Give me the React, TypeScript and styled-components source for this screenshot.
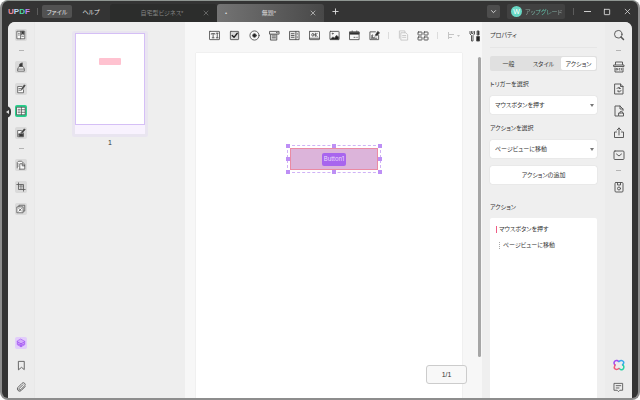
import React from "react";
import styled, { createGlobalStyle, css } from "styled-components";

const GlobalStyle = createGlobalStyle`
  *, *::before, *::after { box-sizing: border-box; }
  html, body, #root { height: 100%; }
  body {
    margin: 0;
    background: #fff;
    color: #333;
    font: 6px/10px "Liberation Sans", "Noto Sans CJK JP", sans-serif;
    font-feature-settings: "palt";
    overflow: hidden;
  }
  button, select { font: inherit; font-feature-settings: inherit; color: inherit; border: 0; padding: 0; margin: 0; background: none; }
  svg { display: block; flex: none; }
`;

/* ---------- window frame ---------- */

const Window = styled.div`
  height: 100vh;
  display: flex;
  flex-direction: column;
  padding: 0 6px;
  background: #343434;
  border: 2px solid #8d8d8d;
  border-top: 1px solid #8f9692;
  border-radius: 8px;
  overflow: hidden;
`;

const TitleBar = styled.header`
  flex: none;
  height: 21px;
  display: flex;
  align-items: center;
  color: #e4e4e4;
`;

const Logo = styled.div`
  width: 29px;
  font: bold 8px/10px "Liberation Sans", sans-serif;
  display: flex;
`;

const Glyph = styled.span<{ $color: string }>`
  color: ${(p) => p.$color};
`;

const BarRule = styled.span<{ $dark?: boolean }>`
  flex: none;
  width: 1px;
  height: 7px;
  background: ${(p) => (p.$dark ? "#5c5c5c" : "#dcdcdc")};
`;

const MenuButton = styled.button<{ $active?: boolean }>`
  height: 13px;
  width: 30px;
  margin-left: 4px;
  border-radius: 2px;
  white-space: nowrap;
  background: ${(p) => (p.$active ? "#525252" : "transparent")};
`;

const Tabs = styled.div`
  align-self: flex-end;
  display: flex;
  margin-left: 4px;
`;

const DocTab = styled.div<{ $active?: boolean }>`
  width: 107px;
  height: 18px;
  display: flex;
  align-items: center;
  padding: 0 6px 0 8px;
  border-radius: 3px 3px 0 0;
  ${(p) =>
    p.$active
      ? css`
          color: #dedede;
          background: linear-gradient(90deg, #747474, #484848);
        `
      : css`
          color: #858585;
          background: #2c2d2c;
        `}
`;

const TabName = styled.span`
  flex: 1;
  text-align: center;
  white-space: nowrap;
`;

const TabMark = styled.span`
  width: 5px;
`;

const BareButton = styled.button`
  flex: none;
  display: grid;
  place-items: center;
  width: 10px;
  height: 10px;
`;

const NewTab = styled(BareButton)`
  margin-left: 6px;
`;

const Spacer = styled.span`
  flex: 1;
`;

const DropButton = styled(BareButton)`
  width: 13px;
  height: 13px;
  background: #4d4d4d;
  border-radius: 2px;
`;

const Upgrade = styled.button`
  width: 58px;
  height: 15px;
  margin: 0 8px 0 7px;
  padding-left: 4px;
  display: flex;
  align-items: center;
  gap: 3px;
  border-radius: 2px;
  background: #414141;
  white-space: nowrap;
`;

const Avatar = styled.span`
  width: 11px;
  height: 11px;
  border-radius: 50%;
  background: #68d7c4;
  color: #fff;
  font-size: 7px;
  text-align: center;
  line-height: 11px;
`;

const UpgradeText = styled.span`
  color: transparent;
  background: linear-gradient(90deg, #9aa29f, #5dcbb0 50%, #a5a5a5);
  background-clip: text;
`;

const WindowButtons = styled.div`
  display: flex;
  gap: 10px;
  margin-left: 8px;
`;

const Body = styled.div`
  flex: 1;
  min-height: 0;
  display: flex;
  background: #eee;
  border-radius: 7px 7px 0 0;
`;

/* ---------- rails ---------- */

const Rail = styled.nav<{ $side: "left" | "right" }>`
  position: relative;
  flex: none;
  width: 27px;
  display: flex;
  flex-direction: column;
  align-items: center;
  gap: 10px;
  padding: 7px 0 5px;
  background: #ececec;
  border-radius: ${(p) => (p.$side === "left" ? "7px 0 0 0" : "0 7px 0 0")};
  ${(p) => p.$side === "left" && "border-right: 1px solid #e8e8e8;"}
`;

const RailButton = styled.button<{ $tone?: "plain" | "tile" | "green" | "violet" }>`
  flex: none;
  width: 12px;
  height: 12px;
  display: grid;
  place-items: center;
  border-radius: 2px;
  color: ${(p) => (p.$tone === "violet" ? "#ad66f5" : "#555")};
  background: ${(p) =>
    ({ plain: "transparent", tile: "#dadada", green: "#27cf8c", violet: "#e2cdfb" })[p.$tone ?? "plain"]};
`;

const RailRule = styled.span`
  flex: none;
  width: 5px;
  height: 1px;
  margin-top: -1px;
  background: #b4b4b4;
`;

const CollapseHandle = styled.button`
  position: absolute;
  left: -5px;
  top: 84px;
  width: 8px;
  height: 12px;
  border-radius: 0 5px 5px 0;
  background: #343434;
  display: grid;
  place-items: center;
`;

/* ---------- thumbnails ---------- */

const Thumbnails = styled.aside`
  flex: none;
  width: 150px;
  padding-top: 9px;
  background: #eee;
  display: flex;
  flex-direction: column;
  align-items: center;
`;

const ThumbFrame = styled.button`
  width: 76px;
  padding: 2px 3px 3px;
  background: #e9e5f0;
  border-radius: 2px;
`;

const ThumbPage = styled.div`
  height: 92px;
  padding: 24px 23px 0;
  background: #fff;
  border: 1px solid #d5bff6;
`;

const ThumbField = styled.div`
  height: 7px;
  background: #ffc2d0;
  border-radius: 1px;
`;

const ThumbFoot = styled.div`
  height: 9px;
  background: #f8f2fe;
`;

const ThumbNumber = styled.span`
  margin-top: 1px;
  font-size: 7px;
`;

/* ---------- canvas ---------- */

const Canvas = styled.main`
  position: relative;
  flex: 1;
  min-width: 0;
  display: flex;
  flex-direction: column;
  background: #f7f7f7;
`;

const Toolbar = styled.div`
  flex: none;
  height: 30px;
  display: flex;
  align-items: center;
  gap: 8px;
  padding: 0 0 3px 23px;
`;

const ToolButton = styled.button<{ $faint?: boolean; $wide?: boolean }>`
  flex: none;
  width: ${(p) => (p.$wide ? 15 : 12)}px;
  height: 12px;
  display: grid;
  place-items: center;
  color: ${(p) => (p.$faint ? "#c4c4c4" : "#505050")};
`;

const Viewport = styled.div`
  flex: 1;
  min-height: 0;
  display: flex;
  padding: 1px 1px 0 11px;
`;

const Page = styled.div`
  position: relative;
  flex: 1;
  background: #fff;
  box-shadow: 0 0 1px #ccc;
  clip-path: inset(-1px -1px 0 -1px);
`;

const ScrollTrack = styled.div`
  flex: none;
  width: 19px;
  display: flex;
  justify-content: flex-end;
  padding: 4px 0 41px;
`;

const ScrollThumb = styled.div`
  width: 3px;
  border-radius: 2px;
  background: #a6a6a6;
`;

const Selection = styled.div`
  position: absolute;
  left: 91px;
  top: 92px;
  width: 94px;
  height: 28px;
  padding: 2px;
  border: 1px dashed #d0b2f6;
`;

const FormField = styled.div`
  height: 100%;
  display: grid;
  place-items: center;
  background: #dcb4da;
  border: 1px solid #ea8ba4;
`;

const FieldName = styled.button`
  height: 13px;
  width: 24px;
  border-radius: 2px;
  background: #a865ee;
  color: #ecdcfc;
  font-family: Inter, "Liberation Sans", sans-serif;
`;

const Handle = styled.span<{ $x: number; $y: number }>`
  position: absolute;
  left: ${(p) => p.$x}%;
  top: ${(p) => p.$y}%;
  width: 4px;
  height: 4px;
  margin: -2px;
  background: #bd8ff5;
`;

const PageCount = styled.output`
  position: absolute;
  right: 15px;
  bottom: 14px;
  width: 41px;
  height: 19px;
  display: grid;
  place-items: center;
  background: #f8f8f8;
  border: 1px solid #ccc;
  border-radius: 3px;
  font-size: 7px;
`;

/* ---------- properties ---------- */

const Properties = styled.section`
  flex: none;
  width: 123px;
  display: flex;
  flex-direction: column;
  padding: 8px 8px 0;
  background: #efefef;
  white-space: nowrap;
`;

const PanelTitle = styled.h2`
  margin: 0;
  font: inherit;
  height: 18px;
  border-bottom: 1px solid #e6e6e6;
`;

const Segments = styled.div`
  display: flex;
  height: 15px;
  margin: 8px 0;
  padding: 1px;
  background: #e0e0e0;
  border-radius: 2px;
`;

const Segment = styled.button<{ $active?: boolean }>`
  flex: 1;
  border-radius: 2px;
  background: ${(p) => (p.$active ? "#fff" : "transparent")};
`;

const FieldLabel = styled.label`
  height: 17px;
`;

const SelectBox = styled.div`
  display: flex;
  align-items: center;
  height: 18px;
  margin-bottom: 9px;
  padding: 0 3px 0 5px;
  background: #fff;
  border-radius: 2px;
  box-shadow: 0 0 1px #bbb;
`;

const Select = styled.select`
  appearance: none;
  flex: 1;
  min-width: 0;
  outline: 0;
`;

const AddButton = styled.button`
  flex: none;
  height: 18px;
  margin: -1px 0 18px;
  background: #fff;
  border-radius: 2px;
  box-shadow: 0 0 1px #bbb;
`;

const ActionTitle = styled.h3`
  margin: 0 0 6px;
  font: inherit;
`;

const ActionList = styled.ul`
  flex: 1;
  margin: 0;
  padding: 6px;
  display: flex;
  flex-direction: column;
  gap: 6px;
  list-style: none;
  background: #fff;
  border-radius: 2px 2px 0 0;
`;

const ActionItem = styled.li<{ $nested?: boolean }>`
  display: flex;
  align-items: center;
  gap: ${(p) => (p.$nested ? 3 : 2)}px;
  padding-left: ${(p) => (p.$nested ? 3 : 0)}px;
`;

const Marker = styled.span<{ $nested?: boolean }>`
  width: 1px;
  height: 7px;
  ${(p) => (p.$nested ? "border-left: 1px dotted #aaa;" : "background: #ee5c85;")}
`;

/* ---------- icons ---------- */

type IconProps = { size?: number; children: React.ReactNode };

const Icon = ({ size = 12, children }: IconProps) => (
  <svg
    width={size}
    height={size}
    viewBox="0 0 24 24"
    fill="none"
    stroke="currentColor"
    strokeWidth={1.9}
    strokeLinecap="round"
    strokeLinejoin="round"
    aria-hidden="true"
  >
    {children}
  </svg>
);

const icons = {
  reader: <><path d="M3 3h18v18H3z" fill="#fafafa" /><path d="M11 3v18M6 8h2M6 12h2M14 15h4" /><path d="M14 3h5v8l-2.500-2-2.500 2z" fill="#333" /></>,
  marker: <><path d="M4 21v-4c0-3 3-4 3-6h10c0 2 3 3 3 6v4z" fill="#fafafa" /><path d="M8 10l1-5 6-3v8z" fill="#333" /><path d="M5 17h14" /></>,
  edit: <><path d="M18 14v7H4V6h10" fill="#fafafa" /><path d="M7 11h5M7 15h4" /><path d="M13 14l1-4 6-8 2 2-6 8z" fill="#333" /></>,
  form: <><path d="M2 3h20v18H2z" fill="#fff" /><path d="M5 8h5M5 12h5M5 16h5M13 3v18M13 9h8M13 15h8" /></>,
  sign: <><path d="M18 12v9H4V6h9" fill="#fafafa" /><path d="M7 14h10v6H8z" fill="#333" /><path d="M12 11l8-9 2 2-7 8z" fill="#333" /></>,
  pages: <><path d="M3 19V6l3-3h7l8 7v12H9" fill="#fafafa" /><path d="M9 22V9h6l6 5M15 9v5h5" /><path d="M5 9v1M5 14v1" /></>,
  crop: <><path d="M6 2v16h16M2 6h16v16" /><path d="M7 10h10M11 6v11M14 6v11" strokeWidth="1" /></>,
  batch: <><path d="M7 7V3h14v14h-4" /><path d="M3 7h14v14H3z" fill="#fafafa" /><path d="M7 11l6 6M13 11l-6 6" /></>,
  layers: <><path d="M12 3l9 5v8l-9 5-9-5V8z" fill="#d5adfb" /><path d="M3 9l9 5 9-5M12 14v7M4 14l8 4 8-4" stroke="#9c4df0" /></>,
  bookmark: <path d="M6 3h12v18l-6-5-6 5z" />,
  clip: <path d="M20 10l-9 9a5 5 0 0 1-7-7l9-9a3.500 3.500 0 0 1 6 5l-9 9a2 2 0 0 1-3-3l8-8" />,
  search: <><circle cx="10.500" cy="10.500" r="7.500" /><path d="M16 16l5 5" strokeWidth="3" /></>,
  ocr: <><path d="M5 7V2h14v5M2 8h20v3H2zM4 14v8h16v-8" /><path d="M7 15h2v3H7zM14 18h-2v-3h2M17 18v-3" strokeWidth="1.500" /></>,
  convert: <><path d="M4 2h11l5 5v15H4zM15 2v5h5" /><path d="M8 11a4 4 0 0 1 7 0h-3M16 15a4 4 0 0 1-7 1h3" /></>,
  protect: <><path d="M10 22H4V2h10l6 6v3M14 2v6h6" /><path d="M12 16h9v6h-9zM14 16v-1a2 2 0 0 1 5 0v1" /></>,
  share: <path d="M7 10H3v11h18V10h-4M12 16V2M8 6l4-4 4 4" />,
  mail: <><rect x="2" y="4" width="20" height="17" rx="2" /><path d="M7 10l5 4 5-4" /></>,
  save: <><rect x="4" y="3" width="16" height="19" rx="2" /><path d="M9 3v5h6V3" /><circle cx="12" cy="15" r="3" /></>,
  comment: <path d="M3 3h18v15h-6l-3 3-3-3H3zM7 8h10M7 13h6" />,
  textField: <><rect x="1" y="3" width="22" height="18" rx="1" /><path d="M5 9V8h8v1M9 8v9M7 17h4M18 7v10M16 7h4M16 17h4" /></>,
  check: <><rect x="3" y="3" width="18" height="18" rx="1" fill="#d9d9d9" /><path d="M7 12l4 4 7-9" strokeWidth="3" stroke="#222" /></>,
  radio: <><circle cx="12" cy="12" r="10" /><circle cx="12" cy="12" r="4" fill="#222" /></>,
  combo: <><path d="M4 9h13v13H4z" fill="#ddd" /><path d="M2 3h20v6H2z" fill="#eee" /><path d="M7 13h7M7 17h7M16 5l2 2 2-2" /></>,
  list: <><path d="M2 3h20v18H2z" fill="#e6e6e6" /><path d="M5 8h6M5 12h6M5 16h6M15 3v18M18 8v1M18 15v1" /></>,
  ok: <><rect x="1" y="3" width="22" height="18" rx="1" /><path d="M1 18h22" /><ellipse cx="8.500" cy="10.500" rx="2.500" ry="3" /><path d="M14 7v7M18 7l-4 4 4 3" /></>,
  image: <><rect x="2" y="3" width="20" height="18" rx="1" /><path d="M3 20l6-5 3 3 4-6 5 3v5z" fill="#222" /><circle cx="8" cy="8" r="1" /></>,
  date: <><path d="M2 4h20v17H2z" /><path d="M2 5h20v4H2z" fill="#222" /><path d="M7 2v3M17 2v3M11 16h2M17 16h1" /></>,
  signature: <><path d="M14 4H2v17h19v-9" /><path d="M6 17c5-7 0-9 0-4s6 5 7 2M5 18h12" /><path d="M14 11l5-8 4 3-5 6z" fill="#222" /></>,
  copy: <path d="M7 6h10l4 4v12H7zM3 18V2h12v4M10 12h7M10 16h7" />,
  align: <><rect x="2" y="4" width="8" height="6" rx="1" /><rect x="14" y="4" width="8" height="6" rx="1" /><rect x="2" y="14" width="8" height="6" rx="1" /><rect x="14" y="14" width="8" height="6" rx="1" /></>,
  tools: <><path d="M2 3v5l3 3v11h3V11l3-3V3M5 3v4h3V3" /><path d="M17 2h3v8h-3zM16 13h5v9h-5z" fill="#222" /></>,
  cross: <path d="M4 4l16 16M20 4L4 20" strokeWidth="2.500" />,
  plus: <path d="M12 3v18M3 12h18" strokeWidth="3" />,
  chevron: <path d="M5 9l7 7 7-7" strokeWidth="3" />,
  minimize: <path d="M1 12h22" strokeWidth="3" />,
  maximize: <rect x="4" y="4" width="16" height="16" rx="1" strokeWidth="2.500" />,
};

type IconName = keyof typeof icons;

const Draw = ({ name, size }: { name: IconName; size?: number }) => <Icon size={size}>{icons[name]}</Icon>;

const AssistantIcon = () => (
  <Icon>
    <g strokeWidth="3">
      <path d="M4 12c-4-4-1-10 4-9l4 2" stroke="#a04bf0" />
      <path d="M12 5c5-4 11-1 9 4l-2 3" stroke="#37a8ee" />
      <path d="M20 12c4 5 0 11-5 9l-3-2" stroke="#28d3a2" />
      <path d="M12 19c-5 4-11 1-9-4l1-3" stroke="#f05b79" />
    </g>
  </Icon>
);

const Caret = () => (
  <svg width="4" height="3" viewBox="0 0 4 3" aria-hidden="true">
    <path d="M0 0h4L2 3z" fill="#777" />
  </svg>
);

/* ---------- data ---------- */

const leftTools: [IconName, string][][] = [
  [["reader", "リーダー"]],
  [["marker", "注釈"], ["edit", "編集"], ["form", "フォーム"], ["sign", "署名"]],
  [["pages", "ページ"], ["crop", "トリミング"], ["batch", "バッチ"]],
];

const rightTools: [IconName, string][][] = [
  [["search", "検索"]],
  [["ocr", "OCR"], ["convert", "変換"], ["protect", "保護"], ["share", "共有"], ["mail", "メール"]],
  [["save", "保存"]],
];

const fieldTools: IconName[] = ["textField", "check", "radio", "combo", "list", "ok", "image", "date", "signature"];

const handles = [[0, 0], [50, 0], [100, 0], [0, 50], [100, 50], [0, 100], [50, 100], [100, 100]];

const RailGroups = ({ groups, tile }: { groups: [IconName, string][][]; tile?: boolean }) => (
  <>
    {groups.map((group, i) => (
      <React.Fragment key={i}>
        {i > 0 && <RailRule />}
        {group.map(([name, label]) => (
          <RailButton key={name} aria-label={label} $tone={name === "form" ? "green" : tile ? "tile" : "plain"}>
            <Draw name={name} size={tile ? 10 : 12} />
          </RailButton>
        ))}
      </React.Fragment>
    ))}
  </>
);

export default function App() {
  return (
    <>
      <GlobalStyle />
      <Window>
        <TitleBar>
          <Logo>
            <Glyph $color="#ed8d9a">U</Glyph>
            <Glyph $color="#b5d7f2">P</Glyph>
            <Glyph $color="#4fd6a6">D</Glyph>
            <Glyph $color="#c18af2">F</Glyph>
          </Logo>
          <BarRule $dark />
          <MenuButton $active>ファイル</MenuButton>
          <MenuButton>ヘルプ</MenuButton>
          <Tabs>
            <DocTab>
              <TabMark />
              <TabName>自宅型ビジネス*</TabName>
              <BareButton aria-label="閉じる"><Draw name="cross" size={6} /></BareButton>
            </DocTab>
            <DocTab $active>
              <TabMark>•</TabMark>
              <TabName>無題*</TabName>
              <BareButton aria-label="閉じる"><Draw name="cross" size={6} /></BareButton>
            </DocTab>
          </Tabs>
          <NewTab aria-label="新しいタブ"><Draw name="plus" size={7} /></NewTab>
          <Spacer />
          <DropButton aria-label="タブ一覧"><Draw name="chevron" size={7} /></DropButton>
          <Upgrade>
            <Avatar>W</Avatar>
            <UpgradeText>アップグレード</UpgradeText>
          </Upgrade>
          <BarRule $dark />
          <WindowButtons>
            <BareButton aria-label="最小化"><Draw name="minimize" size={7} /></BareButton>
            <BareButton aria-label="最大化"><Draw name="maximize" size={8} /></BareButton>
            <BareButton aria-label="閉じる"><Draw name="cross" size={7} /></BareButton>
          </WindowButtons>
        </TitleBar>
        <Body>
          <Rail $side="left">
            <RailGroups groups={leftTools} tile />
            <Spacer />
            <RailButton $tone="violet" aria-label="レイヤー"><Draw name="layers" size={10} /></RailButton>
            <RailButton aria-label="しおり"><Draw name="bookmark" size={11} /></RailButton>
            <RailButton aria-label="添付"><Draw name="clip" size={11} /></RailButton>
            <CollapseHandle aria-label="折りたたむ">
              <svg width="3" height="4" viewBox="0 0 3 4" aria-hidden="true"><path d="M3 0v4L0 2z" fill="#ddd" /></svg>
            </CollapseHandle>
          </Rail>
          <Thumbnails>
            <ThumbFrame aria-label="ページ 1">
              <ThumbPage><ThumbField /></ThumbPage>
              <ThumbFoot />
            </ThumbFrame>
            <ThumbNumber>1</ThumbNumber>
          </Thumbnails>
          <Canvas>
            <Toolbar>
              {fieldTools.map((name) => (
                <ToolButton key={name} aria-label={name}><Draw name={name} size={11} /></ToolButton>
              ))}
              <BarRule />
              <ToolButton $faint aria-label="copy"><Draw name="copy" size={11} /></ToolButton>
              <ToolButton aria-label="align"><Draw name="align" size={12} /></ToolButton>
              <BarRule />
              <ToolButton $faint $wide aria-label="distribute">
                <svg width="13" height="9" viewBox="0 0 13 9" fill="none" stroke="currentColor" aria-hidden="true">
                  <path d="M1.500 1v7M2 3.500h5M2 6.500h3" /><path d="M10 4h3l-1.500 2z" fill="currentColor" stroke="none" />
                </svg>
              </ToolButton>
              <ToolButton aria-label="tools"><Draw name="tools" size={12} /></ToolButton>
            </Toolbar>
            <Viewport>
              <Page>
                <Selection>
                  <FormField><FieldName>Button1</FieldName></FormField>
                  {handles.map(([x, y]) => <Handle key={`${x}-${y}`} $x={x} $y={y} />)}
                </Selection>
              </Page>
              <ScrollTrack><ScrollThumb /></ScrollTrack>
            </Viewport>
            <PageCount>1/1</PageCount>
          </Canvas>
          <Properties>
            <PanelTitle>プロパティ</PanelTitle>
            <Segments>
              <Segment>一般</Segment>
              <Segment>スタイル</Segment>
              <Segment $active>アクション</Segment>
            </Segments>
            <FieldLabel htmlFor="trigger">トリガーを選択</FieldLabel>
            <SelectBox>
              <Select id="trigger"><option>マウスボタンを押す</option></Select>
              <Caret />
            </SelectBox>
            <FieldLabel htmlFor="action">アクションを選択</FieldLabel>
            <SelectBox>
              <Select id="action"><option>ページビューに移動</option></Select>
              <Caret />
            </SelectBox>
            <AddButton>アクションの追加</AddButton>
            <ActionTitle>アクション</ActionTitle>
            <ActionList>
              <ActionItem><Marker />マウスボタンを押す</ActionItem>
              <ActionItem $nested><Marker $nested />ページビューに移動</ActionItem>
            </ActionList>
          </Properties>
          <Rail $side="right">
            <RailGroups groups={rightTools} />
            <Spacer />
            <RailButton aria-label="AI"><AssistantIcon /></RailButton>
            <RailButton aria-label="コメント"><Draw name="comment" size={11} /></RailButton>
          </Rail>
        </Body>
      </Window>
    </>
  );
}
